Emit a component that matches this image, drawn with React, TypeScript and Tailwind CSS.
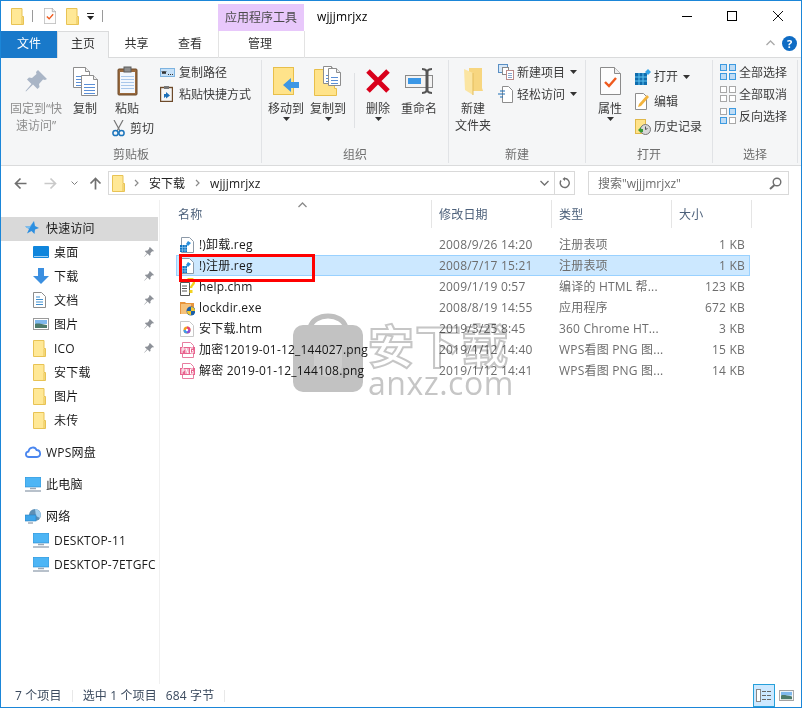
import type { ReactNode } from "react";

function Folder() {
  return (
    <svg width="13" height="17" viewBox="0 0 13 17" className="shrink-0">
      <path d="M.5.5h10.5v8h1.500v8H.5z" fill="#ffe896" stroke="#e8c354" />
      <path d="M11 9v7.500" stroke="#e8c354" />
    </svg>
  );
}

function Caret({ className = "" }: { className?: string }) {
  return (
    <svg width="7" height="4" viewBox="0 0 7 4" className={className}>
      <path d="M0 0h7L3.500 4z" fill="#333" />
    </svg>
  );
}

function Chevron({ up = false, color = "#7a7a7a" }: { up?: boolean; color?: string }) {
  return (
    <svg width="9" height="6" viewBox="0 0 9 6" className="shrink-0">
      <path d={up ? "M.5 5l4-4 4 4" : "M.5 1l4 4 4-4"} fill="none" stroke={color} strokeWidth="1.3" />
    </svg>
  );
}

function Crumb() {
  return (
    <svg width="5" height="8" viewBox="0 0 5 8" className="shrink-0">
      <path d="M1 1l3 3-3 3" fill="none" stroke="#8a8a8a" strokeWidth="1.2" />
    </svg>
  );
}

function Arrow({ d, color }: { d: string; color: string }) {
  return (
    <svg width="13" height="13" viewBox="0 0 13 13" className="shrink-0">
      <path d={d} fill="none" stroke={color} strokeWidth="1.7" />
    </svg>
  );
}

function CheckDoc({ w, h }: { w: number; h: number }) {
  return (
    <svg width={w} height={h} viewBox="0 0 21 28" className="shrink-0">
      <path d="M.5.5h14l6 6v21H.5z" fill="#fdfdfd" stroke="#8b8b8b" />
      <path d="M14.500.5v6h6" fill="#eee" stroke="#8b8b8b" />
      <path d="M5 15l4 4 7-8" fill="none" stroke="#ef5a1e" strokeWidth="2.4" />
    </svg>
  );
}

function Pin() {
  return (
    <svg width="22" height="22" viewBox="0 0 22 22">
      <path
        d="M13 0l9 9-2 1-2-.5-4 4.500.5 3-2 2-4.500-4.500L1 21.500l-.5-.5 6-7L2 9.500l2-2 3 .5 4.500-4-.5-2z"
        fill="#a9b5c6"
      />
    </svg>
  );
}

function Page({ x, y, w = 17, h = 21 }: { x: number; y: number; w?: number; h?: number }) {
  const lines = [9, 12, 15, 18].filter((l) => l < h - 1);
  return (
    <g transform={`translate(${x} ${y})`}>
      <path d={`M.5.5h${w - 5}l4 4v${h - 5}h-${w - 1}z`} fill="#fff" stroke="#8d8d8d" />
      <path d={`M${w - 4.5} .5v4h4`} fill="#eee" stroke="#8d8d8d" />
      {lines.map((l) => (
        <path key={l} d={`M3 ${l}.5h${w - 6}`} stroke="#5b8fd6" />
      ))}
    </g>
  );
}

function CopyIcon() {
  return (
    <svg width="25" height="29" viewBox="0 0 25 29">
      <Page x={0} y={0} />
      <Page x={8} y={8} />
    </svg>
  );
}

function PasteIcon() {
  return (
    <svg width="21" height="30" viewBox="0 0 21 30">
      <rect x="1" y="3" width="19" height="26" rx="1" fill="#9a6a3e" stroke="#6d4a2a" />
      <rect x="3" y="6" width="15" height="21" fill="#f2f7fd" />
      {[10, 13, 16, 19, 22].map((l) => (
        <path key={l} d={`M4 ${l}.5h13`} stroke="#a9c7ea" />
      ))}
      <rect x="7" y="1" width="7" height="5" fill="#8d8d8d" stroke="#5d5d5d" />
    </svg>
  );
}

function Scissors() {
  return (
    <svg width="13" height="17" viewBox="0 0 13 17">
      <path d="M2 0l6 11M11 0L5 11" stroke="#777" strokeWidth="1.2" />
      <circle cx="3.5" cy="13" r="2.6" fill="none" stroke="#1c75bc" strokeWidth="1.5" />
      <circle cx="9.5" cy="13" r="2.6" fill="none" stroke="#1c75bc" strokeWidth="1.5" />
    </svg>
  );
}

function PathIcon() {
  return (
    <svg width="15" height="9" viewBox="0 0 15 9">
      <rect x=".5" y=".5" width="14" height="8" fill="#c6e0f7" stroke="#7db3e0" />
      <path d="M2 3l1 3 1-3 1 3 1-3" fill="none" stroke="#333" />
      <path d="M8 6.500h1M10 6.500h1M12 6.500h1" stroke="#333" />
    </svg>
  );
}

function ShortcutIcon() {
  return (
    <svg width="13" height="16" viewBox="0 0 13 16">
      <rect x=".5" y="1.5" width="12" height="14" fill="#f6f6f6" stroke="#6d4a2a" strokeWidth="1.4" />
      <rect x="4" y="0" width="5" height="3" fill="#777" />
      <path d="M4 12V8h2V6l4 3.500-4 3v-2z" fill="#1c6fb8" />
    </svg>
  );
}

function MoveIcon() {
  return (
    <svg width="27" height="28" viewBox="0 0 27 28">
      <rect x=".5" y=".5" width="20" height="27" fill="#ffe38a" stroke="#e8bf4a" />
      <path d="M10 18l8-7v4h8v6h-8v4z" fill="#3e97e4" />
    </svg>
  );
}

function CopyToIcon() {
  return (
    <svg width="28" height="30" viewBox="0 0 28 30">
      <path d="M.5 3.500h20v19h2v7H.5z" fill="#ffe38a" stroke="#e8bf4a" />
      <Page x={9} y={0} w={13} h={18} />
      <Page x={14} y={2} w={13} h={18} />
    </svg>
  );
}

function DeleteIcon() {
  return (
    <svg width="26" height="26" viewBox="0 0 26 26">
      <path d="M3 3l20 20M23 3L3 23" stroke="#d9001b" strokeWidth="5" />
    </svg>
  );
}

function RenameIcon() {
  return (
    <svg width="28" height="26" viewBox="0 0 28 26">
      <rect x=".5" y="7.5" width="27" height="12" fill="#f3f3f3" stroke="#8a8a8a" />
      <rect x="3" y="10" width="13" height="6" fill="#3b97e6" />
      <path d="M22 2v22" stroke="#555" strokeWidth="3" />
      <path d="M17 1c3 0 4 1 5 2 1-1 2-2 5-2M17 25c3 0 4-1 5-2 1 1 2 2 5 2" fill="none" stroke="#555" strokeWidth="2" />
    </svg>
  );
}

function NewFolderIcon() {
  return (
    <svg width="19" height="27" viewBox="0 0 19 27">
      <path d="M5 0h13v20l1 3H8l-3-3z" fill="#f7d680" />
      <path d="M0 1l9 4v22l-8-5z" fill="#fbe5a2" />
      <path d="M9 5v22" stroke="#e3bb5a" />
    </svg>
  );
}

function NewItemIcon() {
  return (
    <svg width="16" height="16" viewBox="0 0 16 16">
      <rect x=".5" y=".5" width="9" height="8" fill="#d7e8f8" stroke="#5a8fc4" />
      <rect x="4.5" y="3.5" width="6" height="7" fill="#fff" stroke="#888" />
      <rect x="8.5" y="6.5" width="7" height="9" fill="#fff" stroke="#b98a8a" />
      <path d="M10 9.500h4M10 11.500h4M10 13.500h4" stroke="#8aa5cc" />
    </svg>
  );
}

function EasyAccessIcon() {
  return (
    <svg width="15" height="17" viewBox="0 0 15 17">
      <path d="M4.500.5h6l4 4v12h-10z" fill="#fff" stroke="#8d8d8d" />
      <path d="M2 5h5M0 8h7M2 11h3" stroke="#1c6fb8" strokeWidth="1.2" />
    </svg>
  );
}

function OpenIcon() {
  return (
    <svg width="16" height="16" viewBox="0 0 16 16">
      <rect x="0" y="4" width="12" height="12" fill="#0f6cad" />
      <path d="M0 8h12M0 12h12M4 4v12M8 4v12" stroke="#5cc1f0" />
      <path d="M13 0l3 3-3 3-3-3z" fill="#36a3e6" />
    </svg>
  );
}

function EditIcon() {
  return (
    <svg width="15" height="17" viewBox="0 0 15 17">
      <path d="M.5.5h8l3 3v13H.5z" fill="#fff" stroke="#8d8d8d" />
      <path d="M3 14l1-3 8-9 2 2-8 9z" fill="#f2b33d" />
    </svg>
  );
}

function HistoryIcon() {
  return (
    <svg width="16" height="16" viewBox="0 0 16 16">
      <rect x=".5" y=".5" width="10" height="14" fill="#ffe38a" stroke="#e0b84a" />
      <circle cx="10.5" cy="10.5" r="5" fill="#d8d8d8" stroke="#777" />
      <path d="M10.500 7.500v3l2-1" fill="none" stroke="#555" />
      <path d="M3 11l3-3v2h2v3H6v1z" fill="#3a9a35" />
    </svg>
  );
}

function SelectGrid({ variant }: { variant: "all" | "none" | "invert" }) {
  const cells: [number, number][] = [
    [0, 0],
    [9, 0],
    [0, 9],
    [9, 9],
  ];
  return (
    <svg width="16" height="16" viewBox="0 0 16 16">
      {cells.map(([x, y]) => {
        const on = variant === "all" || (variant === "invert" && x !== y);
        return (
          <rect
            key={`${x}-${y}`}
            x={x + 0.5}
            y={y + 0.5}
            width="6"
            height="6"
            fill={on ? "#bfdcf5" : "#fff"}
            stroke={on ? "#3d9ae0" : "#a8a8a8"}
          />
        );
      })}
    </svg>
  );
}

function RegIcon() {
  return (
    <svg width="14" height="16" viewBox="0 0 14 16">
      <path d="M1.500.5h8l4 4v11h-12z" fill="#fff" stroke="#8d9aa8" />
      <rect x="0" y="8" width="7" height="7" fill="#0f73c2" />
      <path d="M0 10.500h7M0 13h7M2.500 8v7M5 8v7" stroke="#9fd3f5" strokeWidth=".6" />
      <path d="M8 4l3 2-3 3-2-2z" fill="#2b8fdc" />
    </svg>
  );
}

function ChmIcon() {
  return (
    <svg width="15" height="18" viewBox="0 0 15 18">
      <path d="M.5 4.500h9v13h-9z" fill="#fff" stroke="#555" />
      <path d="M2 8h5M2 10.500h5M2 13h5" stroke="#555" />
      <path d="M7 3c1-3 7-3 7 1 0 3-3 3-3 6" fill="none" stroke="#f2d21f" strokeWidth="2.4" />
      <rect x="9.5" y="12" width="3" height="3" fill="#f2d21f" />
    </svg>
  );
}

function ExeIcon() {
  return (
    <svg width="15" height="16" viewBox="0 0 15 16">
      <path d="M0 2h5l1 1h8v11H0z" fill="#e8953c" />
      <rect x="1" y="4" width="10" height="10" fill="#f5c27c" />
      <circle cx="11" cy="11" r="4.5" fill="#1c5fa8" />
      <path d="M11 7a4 4 0 014 4h-4zM11 11v4a4 4 0 01-4-4z" fill="#f2c72e" />
    </svg>
  );
}

function HtmIcon() {
  return (
    <svg width="14" height="16" viewBox="0 0 14 16">
      <path d="M.5.500h9l4 4v11H.500z" fill="#fff" stroke="#c8c8c8" />
      <circle cx="7" cy="9" r="3.5" fill="#f0a020" />
      <path d="M7 9V5.500A3.500 3.500 0 0110.500 9z" fill="#e8417c" />
      <path d="M7 9h3.500A3.500 3.500 0 017 12.500z" fill="#8a4fd8" />
      <path d="M7 9v3.500A3.500 3.500 0 013.500 9z" fill="#3f9be8" />
      <circle cx="7" cy="9" r="1.2" fill="#fff" />
    </svg>
  );
}

function PngIcon() {
  return (
    <svg width="16" height="16" viewBox="0 0 16 16">
      <path d="M2.500.5h8l3 3v12h-11z" fill="#fff" stroke="#e87da0" />
      <rect x="0" y="5" width="15" height="7" fill="#e8648f" />
      <path d="M2 11V6h2v2H2M6 11V6l2 5V6M13 6h-2.500v5H13V8.500h-1" fill="none" stroke="#fff" />
    </svg>
  );
}

function StarIcon() {
  return (
    <svg width="14" height="14" viewBox="0 0 14 14">
      <path d="M9 0l1 5 4 2-4 1.500L9.500 13 6.500 10 2 12.500 4 8 0 5.500h5z" fill="#2d8fe0" />
      <path d="M0 5.500h5L9 0 4 8z" fill="#7cc0f2" />
    </svg>
  );
}

function DesktopIcon() {
  return (
    <svg width="16" height="12" viewBox="0 0 16 12">
      <rect x="0" y="0" width="16" height="12" rx="1" fill="#0f85dc" />
      <path d="M1 10.500h14" stroke="#9fd0f5" />
    </svg>
  );
}

function DownloadIcon() {
  return (
    <svg width="16" height="16" viewBox="0 0 16 16">
      <path d="M5 0h6v8h5l-8 8-8-8h5z" fill="#3b8fe0" />
    </svg>
  );
}

function DocIcon() {
  return (
    <svg width="13" height="16" viewBox="0 0 13 16">
      <path d="M.5.500h8l4 4v11H.500z" fill="#fff" stroke="#8d8d8d" />
      <path d="M3 5h4M3 7.500h7M3 10h7M3 12.500h7" stroke="#3f8fcf" />
    </svg>
  );
}

function PictureIcon({ w = 16, h = 12 }: { w?: number; h?: number }) {
  return (
    <svg width={w} height={h} viewBox="0 0 16 12">
      <rect x=".5" y=".5" width="15" height="11" fill="#fff" stroke="#9a9a9a" />
      <rect x="2" y="2" width="12" height="4" fill="#7fb8ec" />
      <path d="M2 6c3-1 6 0 12 1v3H2z" fill="#4d7a6a" />
    </svg>
  );
}

function CloudIcon() {
  return (
    <svg width="16" height="12" viewBox="0 0 16 12">
      <path
        d="M4 11C0 11 0 6 3.500 5.500 4 1 10 0 11.500 4 16 4 16.500 11 12 11z"
        fill="#fff"
        stroke="#4a86ef"
        strokeWidth="1.8"
      />
    </svg>
  );
}

function PcIcon() {
  return (
    <svg width="16" height="15" viewBox="0 0 16 15">
      <rect x="0" y="0" width="16" height="10" fill="#4db5f5" stroke="#2a86c8" strokeWidth=".6" />
      <path d="M5 11.500h6" stroke="#9aa7b5" strokeWidth="1.5" />
      <path d="M0 14h16" stroke="#9aa7b5" strokeWidth="1.4" />
    </svg>
  );
}

function NetworkIcon() {
  return (
    <svg width="16" height="15" viewBox="0 0 16 15">
      <circle cx="10" cy="6" r="6" fill="#5d8fb5" />
      <path d="M10 0a6 6 0 015 9l-4-2z" fill="#a5d0ee" />
      <rect x="0" y="6" width="11" height="6" fill="#3ea5ea" stroke="#2a7fc0" strokeWidth=".6" />
      <path d="M3 14h5" stroke="#9aa7b5" strokeWidth="1.4" />
    </svg>
  );
}

function SmallPin() {
  return (
    <svg width="10" height="10" viewBox="0 0 22 22" className="shrink-0">
      <path
        d="M13 0l9 9-2 1-2-.5-4 4.500.5 3-2 2-4.500-4.500L1 21.500l-.5-.5 6-7L2 9.500l2-2 3 .5 4.500-4-.5-2z"
        fill="#8d9198"
      />
    </svg>
  );
}

function LargeButton({
  icon,
  label,
  width,
  caret = false,
  muted = false,
  children,
}: {
  icon: ReactNode;
  label: ReactNode;
  width: string;
  caret?: boolean;
  muted?: boolean;
  children?: ReactNode;
}) {
  return (
    <div className={`flex flex-col items-center shrink-0 ${width}`}>
      <div className="h-[30px] mt-[6px] flex items-center justify-center">{icon}</div>
      <div className={`mt-[4px] text-center whitespace-nowrap ${muted ? "text-[#8e8e8e]" : "text-[#3c3c3c]"}`}>{label}</div>
      {caret && <Caret />}
      {children}
    </div>
  );
}

function SmallButton({ icon, label, height = "h-[22px]", caret = false }: { icon: ReactNode; label: string; height?: string; caret?: boolean }) {
  return (
    <div className={`flex items-center whitespace-nowrap text-[#3c3c3c] ${height}`}>
      <div className="w-[19px] flex items-center shrink-0">{icon}</div>
      <span>{label}</span>
      {caret && <Caret className="ml-[5px]" />}
    </div>
  );
}

function Group({ title, width, children }: { title: string; width: string; children: ReactNode }) {
  return (
    <div className={`flex flex-col border-r border-[#e1e3e6] shrink-0 ${width}`}>
      <div className="flex flex-1">{children}</div>
      <div className="text-center text-[#6f6f6f] leading-[17px]">{title}</div>
    </div>
  );
}

function Ribbon() {
  return (
    <div className="flex h-[109px] py-[2px] bg-[#f5f6f7] border-y border-[#dadbdc]">
      <Group title="剪贴板" width="w-[261px]">
        <LargeButton
          width="w-[70px]"
          muted
          icon={<Pin />}
          label={
            <>
              固定到“快
              <br />
              速访问”
            </>
          }
        />
        <LargeButton width="w-[28px]" icon={<CopyIcon />} label="复制" />
        <LargeButton width="w-[56px]" icon={<PasteIcon />} label="粘贴">
          <div className="flex items-center gap-[5px] h-[17px] mt-[3px] self-start pl-[13px] text-[#3c3c3c]">
            <Scissors />
            <span>剪切</span>
          </div>
        </LargeButton>
        <div className="flex flex-col ml-[5px] mt-[1px]">
          <SmallButton icon={<PathIcon />} label="复制路径" />
          <SmallButton icon={<ShortcutIcon />} label="粘贴快捷方式" />
        </div>
      </Group>
      <Group title="组织" width="w-[187px]">
        <LargeButton width="w-[48px]" caret icon={<MoveIcon />} label="移动到" />
        <LargeButton width="w-[36px]" caret icon={<CopyToIcon />} label="复制到" />
        <div className="w-px h-[55px] ml-[8px] mt-[13px] bg-[#dfe1e4]" />
        <LargeButton width="w-[46px]" caret icon={<DeleteIcon />} label="删除" />
        <LargeButton width="w-[36px]" icon={<RenameIcon />} label="重命名" />
      </Group>
      <Group title="新建" width="w-[137px]">
        <LargeButton
          width="w-[48px]"
          icon={<NewFolderIcon />}
          label={
            <>
              新建
              <br />
              文件夹
            </>
          }
        />
        <div className="flex flex-col ml-px mt-[1px]">
          <SmallButton icon={<NewItemIcon />} label="新建项目" caret />
          <SmallButton icon={<EasyAccessIcon />} label="轻松访问" caret />
        </div>
      </Group>
      <Group title="打开" width="w-[127px]">
        <LargeButton width="w-[48px]" caret icon={<CheckDoc w={21} h={28} />} label="属性" />
        <div className="flex flex-col ml-px mt-[4px]">
          <SmallButton height="h-[25px]" icon={<OpenIcon />} label="打开" caret />
          <SmallButton height="h-[25px]" icon={<EditIcon />} label="编辑" />
          <SmallButton height="h-[25px]" icon={<HistoryIcon />} label="历史记录" />
        </div>
      </Group>
      <Group title="选择" width="w-[85px]">
        <div className="flex flex-col pl-[7px] mt-[1px]">
          <SmallButton icon={<SelectGrid variant="all" />} label="全部选择" />
          <SmallButton icon={<SelectGrid variant="none" />} label="全部取消" />
          <SmallButton icon={<SelectGrid variant="invert" />} label="反向选择" />
        </div>
      </Group>
    </div>
  );
}

function TitleBar() {
  return (
    <div className="flex h-[30px] items-center pl-[10px]">
      <Folder />
      <div className="w-px h-[12px] ml-[8px] bg-[#9a9a9a]" />
      <div className="ml-[11px]">
        <CheckDoc w={12} h={16} />
      </div>
      <div className="ml-[10px]">
        <Folder />
      </div>
      <svg width="7" height="7" viewBox="0 0 7 7" className="ml-[8px]">
        <path d="M0 0h7v1H0zM0 3h7L3.500 7z" fill="#222" />
      </svg>
      <div className="w-px h-[12px] ml-[8px] bg-[#9a9a9a]" />
      <div className="ml-[115px] w-[86px] h-[27px] self-end flex items-center justify-center bg-[#e8c8fb] text-[#4a4a4a]">应用程序工具</div>
      <span className="ml-[13px] text-black tracking-[0.13px]">wjjjmrjxz</span>
      <div className="ml-auto flex items-center gap-[35px] pr-[18px]">
        <div className="w-[10px] h-px bg-black -translate-x-px" />
        <div className="w-[10px] h-[10px] border border-black -translate-x-px" />
        <svg width="10" height="10" viewBox="0 0 10 10">
          <path d="M0 0l10 10M10 0L0 10" stroke="#111" />
        </svg>
      </div>
    </div>
  );
}

function TabRow() {
  return (
    <div className="flex h-[27px] -mb-px relative items-stretch text-[#333]">
      <div className="w-[56px] bg-[#1979ca] text-white flex items-center justify-center pb-[3px]">文件</div>
      <div className="w-[52px] bg-[#f5f6f7] border-x border-t border-[#dadbdc] flex items-center justify-center pb-[3px]">主页</div>
      <div className="w-[55px] flex items-center justify-center pb-[3px]">共享</div>
      <div className="w-[52px] flex items-center justify-center pb-[3px]">查看</div>
      <div className="w-[87px] ml-[2px] pr-[3px] border-x border-[#e3e3e3] flex items-center justify-center pb-[3px]">管理</div>
      <div className="ml-auto flex items-center gap-[7px] pr-[4px] pb-[3px]">
        <Chevron up color="#a9a9a9" />
        <div className="w-[15px] h-[15px] rounded-full bg-[#0f6cc4] text-white text-[11px] font-bold flex items-center justify-center">?</div>
      </div>
    </div>
  );
}

function AddressBar() {
  return (
    <div className="flex h-[34px] items-center pl-[13px]">
      <Arrow d="M12.500 6.500H1.500M6.500 1.500l-5 5 5 5" color="#6f6f6f" />
      <div className="ml-[17px]">
        <Arrow d="M.5 6.500h11M6.500 1.500l5 5-5 5" color="#c9c9c9" />
      </div>
      <div className="ml-[13px] w-[9px] scale-75">
        <Chevron />
      </div>
      <div className="ml-[10px]">
        <Arrow d="M6.500 12.500v-11M1.500 6.500l5-5 5 5" color="#6f6f6f" />
      </div>
      <div className="ml-[6px] w-[467px] h-[24px] border border-[#d9d9d9] flex items-center pl-[3px]">
        <Folder />
        <div className="ml-[9px]">
          <Crumb />
        </div>
        <span className="ml-[10px] text-[#222]">安下载</span>
        <div className="ml-[10px]">
          <Crumb />
        </div>
        <span className="ml-[10px] text-[#222] tracking-[0.13px]">wjjjmrjxz</span>
        <div className="ml-auto flex items-center h-full">
          <div className="mr-[5px]">
            <Chevron color="#6f6f6f" />
          </div>
          <div className="w-[20px] h-full border-l border-[#d9d9d9] flex items-center justify-center">
            <svg width="11" height="12" viewBox="0 0 11 12">
              <path d="M6 1.500a4.500 4.500 0 11-4 2" fill="none" stroke="#6f6f6f" strokeWidth="1.4" />
              <path d="M6 0v4L3.500 2z" fill="#6f6f6f" />
            </svg>
          </div>
        </div>
      </div>
      <div className="ml-[13px] w-[201px] h-[24px] border border-[#d9d9d9] flex items-center pl-[9px] pr-[6px] text-[#6d6d6d]">
        <span>搜索"wjjjmrjxz"</span>
        <svg width="13" height="13" viewBox="0 0 13 13" className="ml-auto">
          <circle cx="8" cy="5" r="3.800" fill="none" stroke="#6f6f6f" strokeWidth="1.4" />
          <path d="M5.500 8L1 12" stroke="#6f6f6f" strokeWidth="2" />
        </svg>
      </div>
    </div>
  );
}

const quick: { name: string; icon: ReactNode; pinned?: boolean }[] = [
  { name: "桌面", icon: <DesktopIcon />, pinned: true },
  { name: "下载", icon: <DownloadIcon />, pinned: true },
  { name: "文档", icon: <DocIcon />, pinned: true },
  { name: "图片", icon: <PictureIcon />, pinned: true },
  { name: "ICO", icon: <Folder />, pinned: true },
  { name: "安下载", icon: <Folder /> },
  { name: "图片", icon: <Folder /> },
  { name: "未传", icon: <Folder /> },
];

function NavRow({ icon, label, child = false, pinned = false, active = false, className = "" }: { icon: ReactNode; label: string; child?: boolean; pinned?: boolean; active?: boolean; className?: string }) {
  return (
    <div className={`flex items-center h-[24px] pb-[2px] whitespace-nowrap overflow-hidden text-[#1a1a1a] tracking-[0.2px] ${child ? "pl-[32px]" : "pl-[24px]"} ${active ? "bg-[#d9d9d9] w-[157px]" : ""} ${className}`}>
      <div className="w-[21px] flex items-center justify-start shrink-0">{icon}</div>
      <span className="flex-1">{label}</span>
      {pinned && <div className="mr-[5px]"><SmallPin /></div>}
    </div>
  );
}

function Sidebar() {
  return (
    <div className="w-[159px] shrink-0 border-r border-[#f0f0f0] pt-[17px]">
      <NavRow active icon={<StarIcon />} label="快速访问" />
      {quick.map((q, i) => (
        <NavRow key={i} child icon={q.icon} label={q.name} pinned={q.pinned} />
      ))}
      <NavRow className="mt-[8px]" icon={<CloudIcon />} label="WPS网盘" />
      <NavRow className="mt-[8px]" icon={<PcIcon />} label="此电脑" />
      <NavRow className="mt-[8px]" icon={<NetworkIcon />} label="网络" />
      <NavRow child icon={<PcIcon />} label="DESKTOP-11" />
      <NavRow child icon={<PcIcon />} label="DESKTOP-7ETGFC" />
    </div>
  );
}

const files = [
  { name: "!)卸载.reg", date: "2008/9/26 14:20", type: "注册表项", size: "1 KB", icon: <RegIcon /> },
  { name: "!)注册.reg", date: "2008/7/17 15:21", type: "注册表项", size: "1 KB", icon: <RegIcon />, selected: true },
  { name: "help.chm", date: "2009/1/19 0:57", type: "编译的 HTML 帮...", size: "123 KB", icon: <ChmIcon /> },
  { name: "lockdir.exe", date: "2008/8/19 14:55", type: "应用程序", size: "672 KB", icon: <ExeIcon /> },
  { name: "安下载.htm", date: "2019/3/25 8:45", type: "360 Chrome HT...", size: "3 KB", icon: <HtmIcon /> },
  { name: "加密12019-01-12_144027.png", date: "2019/1/12 14:40", type: "WPS看图 PNG 图...", size: "15 KB", icon: <PngIcon /> },
  { name: "解密 2019-01-12_144108.png", date: "2019/1/12 14:41", type: "WPS看图 PNG 图...", size: "14 KB", icon: <PngIcon /> },
];

function FileList() {
  return (
    <div className="flex-1 pl-[16px] tracking-[0.2px]">
      <div className="grid grid-cols-[256px_120px_120px_80px] h-[28px] text-[#4c607a]">
        <div className="relative border-r border-[#e5e5e5] flex items-center pl-[2px]">
          名称
          <div className="absolute left-[122px] top-[2px]">
            <Chevron up color="#8a8a8a" />
          </div>
        </div>
        <div className="border-r border-[#e5e5e5] flex items-center pl-[7px]">修改日期</div>
        <div className="border-r border-[#e5e5e5] flex items-center pl-[7px]">类型</div>
        <div className="border-r border-[#e5e5e5] flex items-center pl-[7px]">大小</div>
      </div>
      <div className="mt-[6px] w-[574px]">
        {files.map((f) => (
          <div
            key={f.name}
            className={`grid grid-cols-[256px_120px_120px_78px] h-[21px] items-center border ${f.selected ? "bg-[#cce8ff] border-[#99d1ff]" : "border-transparent"}`}
          >
            <div className="flex items-center pl-[3px] whitespace-nowrap text-[#1a1a1a]">
              <div className="w-[19px] flex items-center shrink-0">{f.icon}</div>
              <span>{f.name}</span>
            </div>
            <div className="pl-[6px] text-[#6d6d6d] whitespace-nowrap">{f.date}</div>
            <div className="pl-[6px] text-[#6d6d6d] whitespace-nowrap">{f.type}</div>
            <div className="pr-[6px] text-right text-[#6d6d6d] whitespace-nowrap">{f.size}</div>
          </div>
        ))}
      </div>
    </div>
  );
}

function StatusBar() {
  return (
    <div className="flex h-[23px] items-center pl-[14px] text-[#3b4a5e] tracking-[0.13px]">
      <span>7 个项目</span>
      <div className="w-px h-[12px] ml-[10px] bg-[#e8e8e8]" />
      <span className="ml-[10px]">选中 1 个项目</span>
      <span className="ml-[9px]">684 字节</span>
      <div className="w-px h-[12px] ml-[10px] bg-[#e8e8e8]" />
      <div className="ml-auto w-[22px] h-[23px] bg-[#cce8ff] border border-[#26a0da] flex items-center justify-center">
        <svg width="16" height="13" viewBox="0 0 16 13">
          <rect x=".5" y=".5" width="4" height="12" fill="#fff" stroke="#888" />
          <path d="M6 2.500h4M11 2.500h4M6 6.500h4M11 6.500h4M6 10.500h4M11 10.500h4" stroke="#666" />
        </svg>
      </div>
      <div className="ml-[4px] mr-[7px]">
        <PictureIcon w={15} h={11} />
      </div>
    </div>
  );
}

function Watermark() {
  return (
    <div className="absolute left-[292px] top-[311px] w-[230px] h-[82px] flex mix-blend-multiply pointer-events-none">
      <svg width="70" height="80" viewBox="0 0 70 80" className="shrink-0">
        <path d="M17 16C20 0 50 0 53 16" fill="none" stroke="#bfbfbf" strokeWidth="5" />
        <rect x="0" y="13" width="70" height="67" rx="10" fill="#c2c2c2" />
        <path d="M21 35h28v18c0 8-9 12-14 12s-14-4-14-12z" fill="#cdcdcd" />
      </svg>
      <div className="ml-[5px] flex flex-col items-start">
        <div className="mt-[8px] text-[46px] leading-[50px] font-bold text-transparent [-webkit-text-stroke:2px_#c6c6c6] whitespace-nowrap tracking-[1px]">安下载</div>
        <div className="text-[32px] leading-[26px] text-[#c6c6c6] whitespace-nowrap tracking-[0.5px]">anxz.com</div>
      </div>
    </div>
  );
}

export default function App() {
  return (
    <div className="relative w-[802px] h-[708px] overflow-hidden bg-white border border-[#1b86d8] font-['Open_Sans','Noto_Sans_CJK_SC',sans-serif] text-[12px] leading-[17px]">
      <TitleBar />
      <TabRow />
      <Ribbon />
      <AddressBar />
      <div className="flex h-[484px]">
        <Sidebar />
        <FileList />
      </div>
      <StatusBar />
      <Watermark />
      <div className="absolute left-[178px] top-[253px] w-[136px] h-[28px] border-[3px] border-[#ff0000]" />
    </div>
  );
}
